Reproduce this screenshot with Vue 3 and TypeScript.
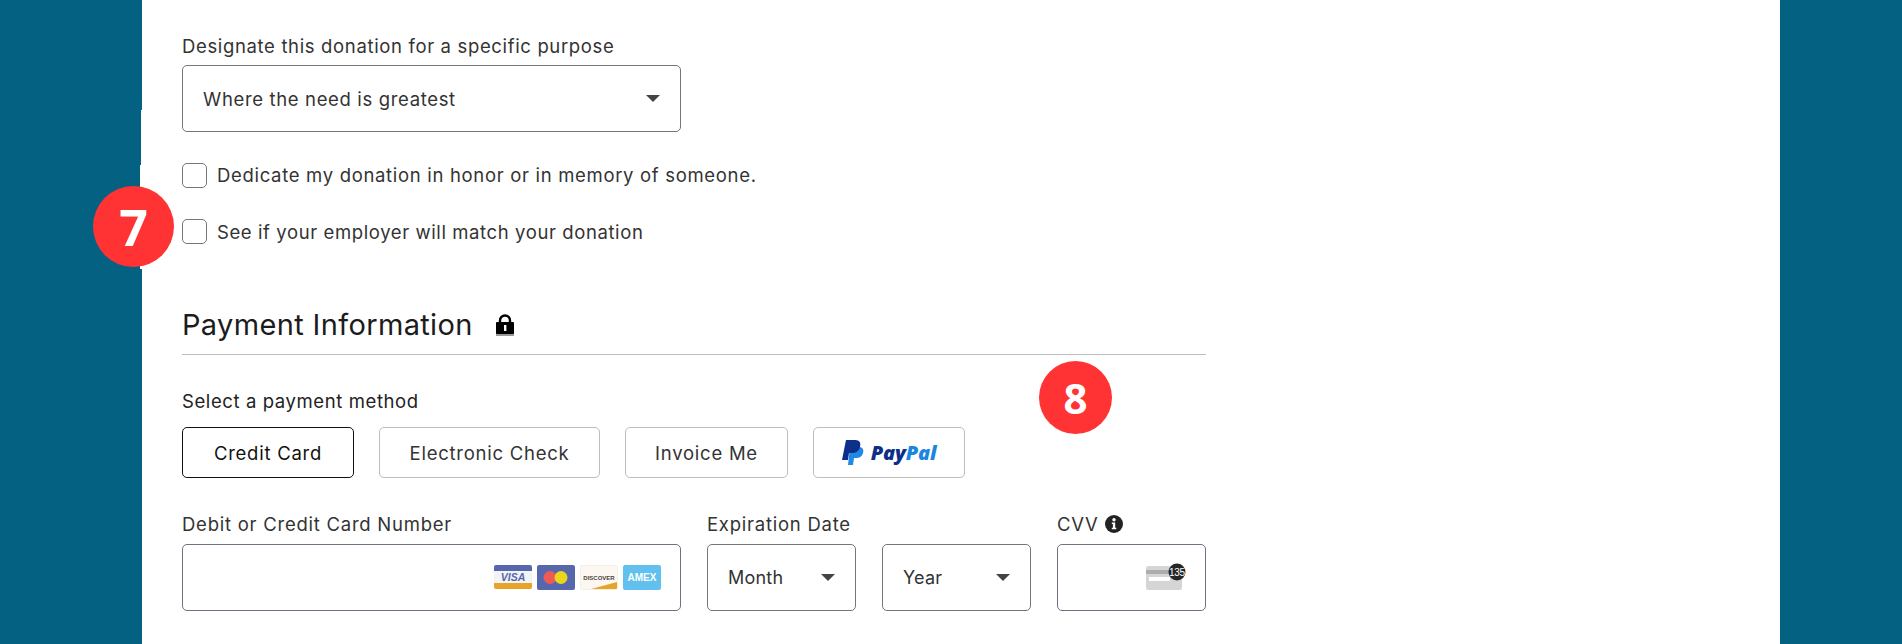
<script setup lang="ts">
interface Tab { label: string; active?: boolean; cls: string }
const tabs: Tab[] = [
  { label: 'Credit Card', active: true, cls: 'w-credit' },
  { label: 'Electronic Check', cls: 'w-check' },
  { label: 'Invoice Me', cls: 'w-invoice' },
]
</script>

<template>
  <div class="page">
    <main class="panel">
      <span class="jag jag-a"></span>
      <span class="jag jag-b"></span>
      <div class="form">
        <label class="lbl first">Designate this donation for a specific purpose</label>
        <div class="select wide">
          <span>Where the need is greatest</span><i class="caret"></i>
        </div>

        <div class="check c1"><span class="box"></span><span>Dedicate my donation in honor or in memory of someone.</span></div>
        <div class="check c2"><span class="box"></span><span>See if your employer will match your donation</span></div>

        <div class="heading">
          <h2>Payment Information</h2>
          <svg class="lock" width="20" height="22" viewBox="0 0 20 22">
            <rect x="1" y="19" width="18" height="3" fill="#999" />
            <path d="M5 9V6.500a5 5 0 0 1 10 0V9" fill="none" stroke="#000" stroke-width="2.400" />
            <rect x="1" y="8" width="18" height="12" rx="1" fill="#000" />
            <rect x="9" y="11" width="2.400" height="6" fill="#fff" />
          </svg>
        </div>

        <label class="lbl method">Select a payment method</label>
        <div class="tabs">
          <button v-for="t in tabs" :key="t.label" class="tab" :class="[t.cls, { active: t.active }]">{{ t.label }}</button>
          <button class="tab paypal">
            <svg width="22" height="28" viewBox="0 0 22 28">
              <path d="M8 8h9c4 0 5 3 4 6-1 4-4 5-7 5h-2l-1 7H6z" fill="#1f8ae6" />
              <path d="M4 1h9c5 0 6 3 5 7-1 4-4 6-8 6H7l-1 7H0z" fill="#0c2f8a" />
            </svg>
            <span class="pp"><b class="p1">Pay</b><b class="p2">Pal</b></span>
          </button>
        </div>

        <div class="fields">
          <div class="f-card">
            <label class="lbl">Debit or Credit Card Number</label>
            <div class="input card-input">
              <svg class="cards" width="167" height="25" viewBox="0 0 167 25">
                <rect x="0" y="0" width="38" height="24" rx="2" fill="#f1f3f4" />
                <path d="M0 6V2a2 2 0 0 1 2-2h34a2 2 0 0 1 2 2v4z" fill="#5667ae" />
                <path d="M0 18v4a2 2 0 0 0 2 2h34a2 2 0 0 0 2-2v-4z" fill="#e8a428" />
                <text x="19" y="16" class="t-visa">VISA</text>

                <rect x="43" y="0" width="38" height="25" rx="2" fill="#5667ae" />
                <circle cx="56" cy="12.500" r="6.500" fill="#ef5b52" />
                <circle cx="67" cy="12.500" r="6.500" fill="#ead61c" />

                <rect x="86.500" y="0.500" width="37" height="24" rx="2" fill="#fdf7f1" stroke="#f3eee8" />
                <path d="M97 24l26-7v6a1 1 0 0 1-1 1z" fill="#e8a428" />
                <text x="105" y="14.500" class="t-disc">DISCOVER</text>

                <rect x="129" y="0" width="38" height="25" rx="2" fill="#62c0ee" />
                <text x="148" y="16" class="t-amex">AMEX</text>
              </svg>
            </div>
          </div>
          <div class="f-exp">
            <label class="lbl">Expiration Date</label>
            <div class="exp-row">
              <div class="select small"><span>Month</span><i class="caret"></i></div>
              <div class="select small"><span>Year</span><i class="caret"></i></div>
            </div>
          </div>
          <div class="f-cvv">
            <label class="lbl cvv-lbl">CVV
              <svg class="info" width="18" height="18" viewBox="0 0 18 18">
                <circle cx="9" cy="9" r="9" fill="#222" />
                <circle cx="9" cy="4.800" r="1.700" fill="#fff" />
                <path d="M6.800 7.500h3.400v5.300h1.100v1.500H6.800v-1.500h1.100V9H6.800z" fill="#fff" />
              </svg>
            </label>
            <div class="input cvv-input">
              <svg class="cvv-card" width="42" height="34" viewBox="0 0 42 34">
                <rect x="0" y="5" width="36" height="24" rx="2" fill="#d5d5d5" />
                <rect x="0" y="9" width="36" height="4" fill="#adadad" />
                <rect x="3" y="16" width="21" height="4" fill="#fff" />
                <circle cx="31" cy="11" r="8.500" fill="#262626" />
                <text x="31" y="14.500" class="t-cvv">135</text>
              </svg>
            </div>
          </div>
        </div>
      </div>
    </main>
    <div class="badge b7">7</div>
    <div class="badge b8">8</div>
  </div>
</template>

<style>
html, body { margin: 0; padding: 0; background: #056182; overflow: hidden; }
</style>

<style scoped>
.page {
  position: relative;
  height: 644px;
  width: 1902px;
  background: #056182;
  overflow: hidden;
  font-family: Inter, "Noto Sans", sans-serif;
  color: #333;
  font-size: 18.5px;
  letter-spacing: 0.75px;
}
.panel {
  position: relative;
  margin-left: 142px;
  width: 1638px;
  height: 644px;
  background: #fff;
}
.jag { position: absolute; background: #fff; }
.jag-a { left: -1px; top: 110px; width: 1px; height: 55px; }
.jag-b { left: -2px; top: 165px; width: 2px; height: 104px; }
.form {
  width: 1025px;
  margin-left: 40px;
  display: flex;
  flex-direction: column;
  align-items: flex-start;
}
.lbl { display: block; line-height: 22px; }
.first { margin-top: 35px; letter-spacing: 0.65px; }
.select {
  box-sizing: border-box;
  display: flex;
  align-items: center;
  justify-content: space-between;
  height: 67px;
  border: 1px solid #75757a;
  border-radius: 5px;
  padding: 0 20px;
  background: #fff;
}
.wide { width: 499px; margin-top: 8px; letter-spacing: 0.65px; }
.small { width: 149px; font-size: 18px; letter-spacing: 0.2px; }
.caret {
  display: block;
  width: 0;
  height: 0;
  border-left: 7px solid transparent;
  border-right: 7px solid transparent;
  border-top: 7px solid #444;
}
.check { display: flex; align-items: center; gap: 10px; height: 26px; }
.c1 { margin-top: 30px; letter-spacing: 0.68px; }
.c2 { margin-top: 31px; height: 25px; letter-spacing: 0.6px; }
.box {
  box-sizing: border-box;
  width: 25px;
  height: 25px;
  border: 1px solid #75757a;
  border-radius: 5px;
}
.heading {
  box-sizing: border-box;
  width: 1024px;
  height: 62px;
  margin-top: 49px;
  border-bottom: 1px solid #bdbdbd;
  display: flex;
  align-items: center;
  gap: 22px;
  padding-top: 3px;
}
.heading h2 { margin: 0; font-size: 29px; font-weight: 400; color: #1c1c1c; line-height: 40px; letter-spacing: 0.35px; }
.lock { flex: none; }
.method { margin-top: 35px; color: #222; letter-spacing: 0.6px; }
.tabs { display: flex; gap: 25px; margin-top: 15px; }
.tab {
  box-sizing: border-box;
  height: 51px;
  padding: 0;
  background: #fff;
  border: 1px solid #bdbdbd;
  border-radius: 5px;
  font: inherit;
  letter-spacing: inherit;
  color: #333;
  display: flex;
  align-items: center;
  justify-content: center;
}
.w-credit { width: 172px; }
.w-check { width: 221px; }
.w-invoice { width: 163px; }
.tab.active { border-color: #111; color: #111; }
.paypal { width: 152px; gap: 7px; }
.pp { font-family: "Open Sans", sans-serif; font-style: italic; font-size: 20px; letter-spacing: -0.2px; }
.pp b { font-weight: 800; }
.p1 { color: #0c2f8a; }
.p2 { color: #1a86e0; }
.fields { display: flex; margin-top: 35px; width: 100%; }
.f-card { width: 525px; }
.f-exp { width: 350px; }
.f-cvv { width: 149px; }
.input {
  box-sizing: border-box;
  height: 67px;
  margin-top: 9px;
  border: 1px solid #6f7280;
  border-radius: 5px;
  position: relative;
  display: flex;
  align-items: center;
  justify-content: flex-end;
}
.card-input { width: 499px; padding-right: 19px; }
.cvv-input { width: 149px; padding-right: 17px; }
.exp-row { display: flex; gap: 26px; margin-top: 9px; }
.cvv-lbl { display: flex; align-items: center; gap: 6px; }
.info { flex: none; }
.cards { display: block; }
.cards text { text-anchor: middle; font-family: "Liberation Sans", sans-serif; font-weight: 700; letter-spacing: 0; }
.t-visa { font-size: 10.5px; font-style: italic; fill: #5667ae; }
.t-disc { font-size: 6px; fill: #444; }
.t-amex { font-size: 10px; fill: #fff; }
.t-cvv { text-anchor: middle; font-family: "Liberation Sans", sans-serif; font-size: 10px; fill: #fff; letter-spacing: -0.3px; }
.badge {
  position: absolute;
  border-radius: 50%;
  background: #ff3333;
  color: #fff;
  font-family: "Open Sans", sans-serif;
  font-weight: 700;
  letter-spacing: 0;
  display: flex;
  align-items: center;
  justify-content: center;
}
.b7 { left: 93px; top: 186px; width: 81px; height: 81px; font-size: 50px; }
.b8 { left: 1039px; top: 361px; width: 73px; height: 73px; font-size: 42px; }
</style>
